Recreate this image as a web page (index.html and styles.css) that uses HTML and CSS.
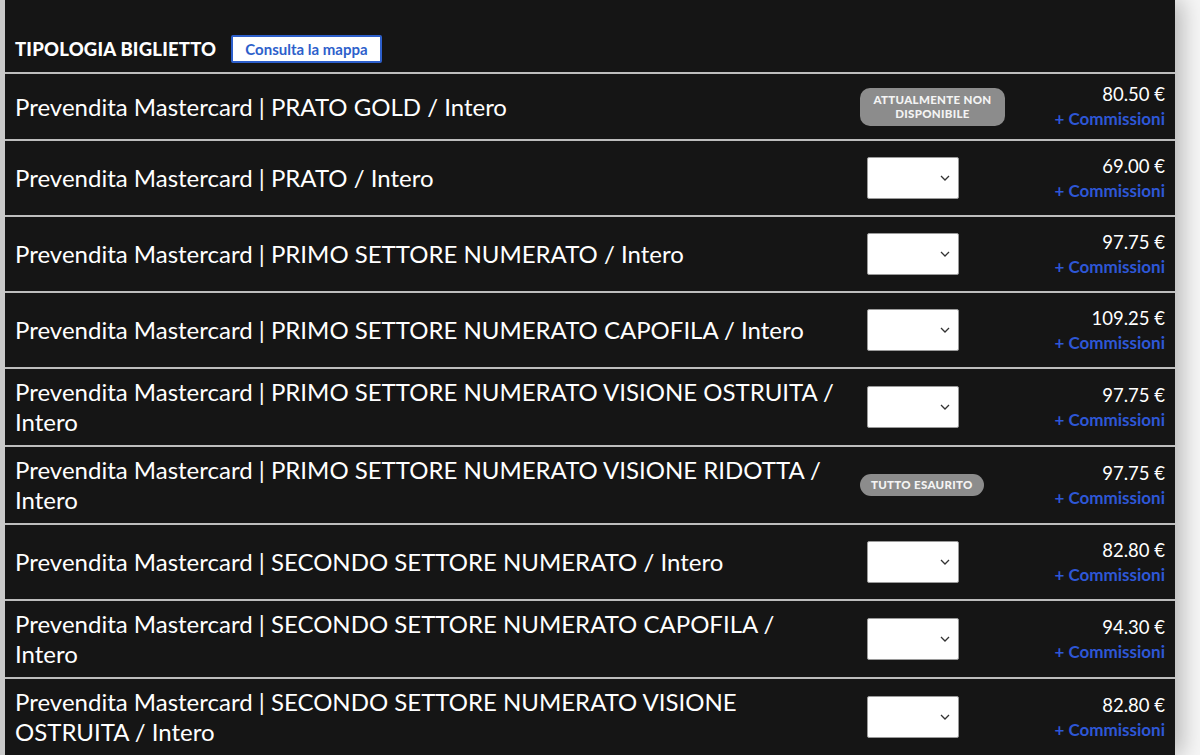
FILE: index.html
```html
<!DOCTYPE html>
<html lang="it">
<head>
<meta charset="utf-8">
<title>Tipologia biglietto</title>
<link rel="stylesheet" href="styles.css">
</head>
<body>
<div class="page">
  <section class="tickets">
    <header class="tickets-head">
      <h2 class="tickets-title">TIPOLOGIA BIGLIETTO</h2>
      <button class="map-btn" type="button">Consulta la mappa</button>
    </header>

    <div class="ticket-row">
      <div class="ticket-name">Prevendita Mastercard | PRATO GOLD / Intero</div>
      <div class="ticket-qty"><span class="badge badge-wide">ATTUALMENTE NON DISPONIBILE</span></div>
      <div class="ticket-price"><span class="amount">80.50 €</span><a class="fees" href="#">+ Commissioni</a></div>
    </div>

    <div class="ticket-row">
      <div class="ticket-name">Prevendita Mastercard | PRATO / Intero</div>
      <div class="ticket-qty"><span class="qty-select"><svg viewBox="0 0 10 6" class="chev"><path d="M1 1l4 4 4-4"/></svg></span></div>
      <div class="ticket-price"><span class="amount">69.00 €</span><a class="fees" href="#">+ Commissioni</a></div>
    </div>

    <div class="ticket-row">
      <div class="ticket-name">Prevendita Mastercard | PRIMO SETTORE NUMERATO / Intero</div>
      <div class="ticket-qty"><span class="qty-select"><svg viewBox="0 0 10 6" class="chev"><path d="M1 1l4 4 4-4"/></svg></span></div>
      <div class="ticket-price"><span class="amount">97.75 €</span><a class="fees" href="#">+ Commissioni</a></div>
    </div>

    <div class="ticket-row">
      <div class="ticket-name">Prevendita Mastercard | PRIMO SETTORE NUMERATO CAPOFILA / Intero</div>
      <div class="ticket-qty"><span class="qty-select"><svg viewBox="0 0 10 6" class="chev"><path d="M1 1l4 4 4-4"/></svg></span></div>
      <div class="ticket-price"><span class="amount">109.25 €</span><a class="fees" href="#">+ Commissioni</a></div>
    </div>

    <div class="ticket-row">
      <div class="ticket-name">Prevendita Mastercard | PRIMO SETTORE NUMERATO VISIONE OSTRUITA / Intero</div>
      <div class="ticket-qty"><span class="qty-select"><svg viewBox="0 0 10 6" class="chev"><path d="M1 1l4 4 4-4"/></svg></span></div>
      <div class="ticket-price"><span class="amount">97.75 €</span><a class="fees" href="#">+ Commissioni</a></div>
    </div>

    <div class="ticket-row">
      <div class="ticket-name">Prevendita Mastercard | PRIMO SETTORE NUMERATO VISIONE RIDOTTA / Intero</div>
      <div class="ticket-qty"><span class="badge">TUTTO ESAURITO</span></div>
      <div class="ticket-price"><span class="amount">97.75 €</span><a class="fees" href="#">+ Commissioni</a></div>
    </div>

    <div class="ticket-row">
      <div class="ticket-name">Prevendita Mastercard | SECONDO SETTORE NUMERATO / Intero</div>
      <div class="ticket-qty"><span class="qty-select"><svg viewBox="0 0 10 6" class="chev"><path d="M1 1l4 4 4-4"/></svg></span></div>
      <div class="ticket-price"><span class="amount">82.80 €</span><a class="fees" href="#">+ Commissioni</a></div>
    </div>

    <div class="ticket-row">
      <div class="ticket-name">Prevendita Mastercard | SECONDO SETTORE NUMERATO CAPOFILA / Intero</div>
      <div class="ticket-qty"><span class="qty-select"><svg viewBox="0 0 10 6" class="chev"><path d="M1 1l4 4 4-4"/></svg></span></div>
      <div class="ticket-price"><span class="amount">94.30 €</span><a class="fees" href="#">+ Commissioni</a></div>
    </div>

    <div class="ticket-row">
      <div class="ticket-name">Prevendita Mastercard | SECONDO SETTORE NUMERATO VISIONE OSTRUITA / Intero</div>
      <div class="ticket-qty"><span class="qty-select"><svg viewBox="0 0 10 6" class="chev"><path d="M1 1l4 4 4-4"/></svg></span></div>
      <div class="ticket-price"><span class="amount">82.80 €</span><a class="fees" href="#">+ Commissioni</a></div>
    </div>
  </section>
</div>
</body>
</html>
```

FILE: styles.css
```css
html, body {
  margin: 0;
  padding: 0;
  height: 100%;
  overflow: hidden;
}

body {
  background: #f6f6f6;
  font-family: "Lato", "Noto Sans", sans-serif;
  color: #fff;
}

.page {
  display: flex;
  height: 100%;
}

.tickets {
  width: 1170px;
  background: #151515;
  border-left: 5px solid #c9c9c9;
  box-shadow: 6px 0 22px rgba(0, 0, 0, 0.28);
}

.tickets-head {
  display: flex;
  align-items: center;
  gap: 15px;
  padding: 35px 10px 9px;
  border-bottom: 2px solid #bdbdbd;
}

.tickets-title {
  margin: 0;
  font-size: 18.5px;
  font-weight: 900;
  letter-spacing: 0.2px;
}

.map-btn {
  font-family: inherit;
  font-size: 15px;
  font-weight: 700;
  color: #2d5fcb;
  background: #fff;
  border: 2px solid #2d5fcb;
  border-radius: 2px;
  padding: 0 12px;
  height: 28px;
}

.ticket-row {
  display: grid;
  grid-template-columns: 1fr 145px 160px;
  align-items: center;
  padding: 8px 10px;
  border-bottom: 2px solid #bdbdbd;
}

.ticket-name {
  font-size: 24px;
  line-height: 30px;
  padding-right: 20px;
}

.ticket-qty {
  display: flex;
  align-items: center;
}

.qty-select {
  width: 92px;
  height: 42px;
  margin: 8px 0 8px 7px;
  background: #fff;
  border: 1px solid #9a9a9a;
  border-radius: 2px;
  display: flex;
  align-items: center;
  justify-content: flex-end;
  padding-right: 8px;
  box-sizing: border-box;
}

.chev {
  width: 10px;
  height: 6px;
  fill: none;
  stroke: #333;
  stroke-width: 1.3;
}

.badge {
  display: inline-block;
  background: #8c8c8c;
  color: #f4f4f4;
  font-size: 11.5px;
  font-weight: 900;
  letter-spacing: 0.3px;
  line-height: 14px;
  text-align: center;
  border-radius: 11px;
  padding: 4px 11px;
}

.badge-wide {
  padding: 5px 10px;
  border-radius: 10px;
}

.ticket-price {
  display: flex;
  flex-direction: column;
  align-items: flex-end;
}

.amount {
  font-size: 18.5px;
  line-height: 25px;
}

.fees {
  font-size: 17px;
  line-height: 24px;
  font-weight: 700;
  color: #2e57d6;
  text-decoration: none;
}
```
